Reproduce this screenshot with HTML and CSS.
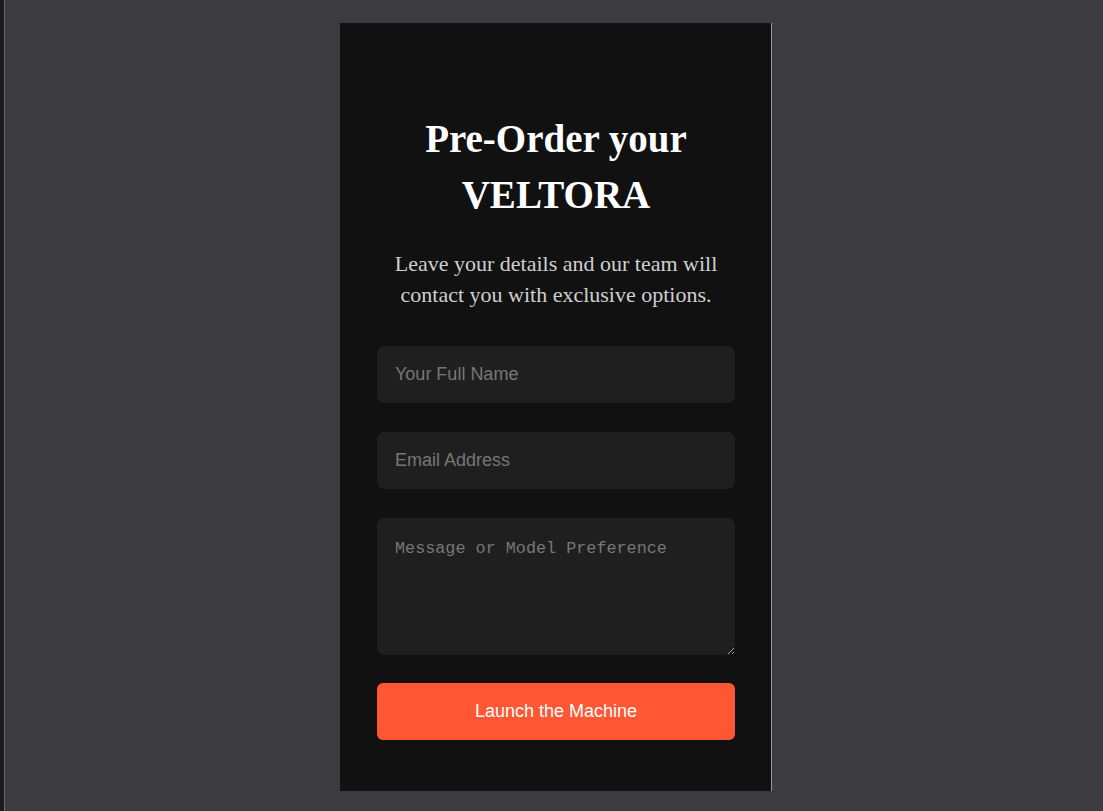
FILE: index.html
```html
<!DOCTYPE html>
<html lang="en">
<head>
<meta charset="utf-8">
<title>Pre-Order your VELTORA</title>
<link rel="stylesheet" href="styles.css">
</head>
<body>
<div class="frame">
  <div class="edge"></div>
  <main class="stage">
    <section class="card">
      <h2 class="title">Pre-Order your VELTORA</h2>
      <p class="lead">Leave your details and our team will contact you with exclusive options.</p>
      <form class="form">
        <input class="field" type="text" placeholder="Your Full Name">
        <input class="field" type="email" placeholder="Email Address">
        <textarea class="field area" placeholder="Message or Model Preference"></textarea>
        <button class="btn" type="button">Launch the Machine</button>
      </form>
    </section>
  </main>
</div>
</body>
</html>
```
FILE: styles.css
```css
html, body {
  margin: 0;
  padding: 0;
  height: 100%;
}
body {
  background: #3c3b40;
  overflow: hidden;
}
.frame {
  display: flex;
  height: 811px;
}
.edge {
  width: 4px;
  background: #1b1b1d;
  border-right: 1px solid #6a6a6e;
  flex: none;
}
.stage {
  flex: 1;
  padding-top: 23px;
  padding-left: 335px;
}
.card {
  box-sizing: border-box;
  width: 432px;
  height: 768px;
  background: #111111;
  border-right: 1px solid #9a9a9a;
  padding: 88px 36px 51px 37px;
  text-align: center;
}
.title {
  margin: 0 auto;
  width: 300px;
  font-family: "Liberation Serif", "Times New Roman", serif;
  font-weight: 700;
  font-size: 39px;
  line-height: 56px;
  color: #ffffff;
}
.lead {
  margin: 25px -10px 36px;
  font-family: "Liberation Serif", "Times New Roman", serif;
  font-size: 22px;
  line-height: 31px;
  color: #cfcfcf;
}
.form {
  display: flex;
  flex-direction: column;
  gap: 28.5px;
}
.field {
  box-sizing: border-box;
  width: 358px;
  height: 57.3px;
  border: none;
  outline: none;
  border-radius: 7px;
  background: #1f1f1f;
  color: #e0e0e0;
  padding: 0 18px;
  font-family: "Liberation Sans", Arial, sans-serif;
  font-size: 18px;
}
.field::placeholder {
  color: #777777;
}
.area {
  height: 137px;
  padding: 20px 18px;
  font-family: "Liberation Mono", "Courier New", monospace;
  font-size: 16.8px;
  line-height: 22px;
  resize: vertical;
}
.btn {
  box-sizing: border-box;
  width: 358px;
  height: 57.3px;
  border: none;
  border-radius: 6px;
  background: #ff5733;
  color: #ffffff;
  font-family: "Liberation Sans", Arial, sans-serif;
  font-size: 18px;
  cursor: pointer;
}
```
